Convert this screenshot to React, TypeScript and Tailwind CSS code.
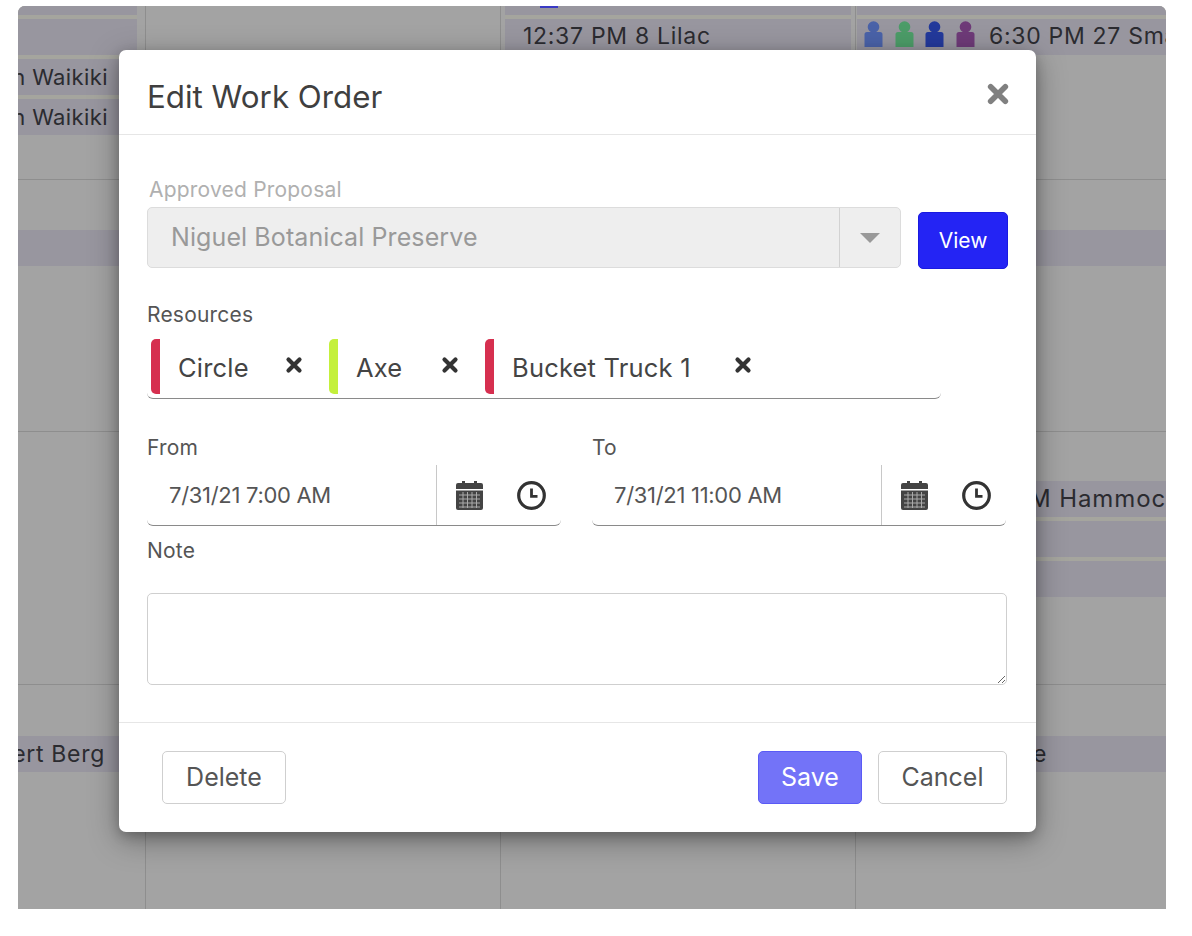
import type { ReactNode } from "react";

const font = "font-['Inter','Noto_Sans',sans-serif]";

function Person({ color }: { color: string }) {
  return (
    <svg width="19" height="26" viewBox="0 0 19 26" className="mb-[6px] shrink-0">
      <circle cx="9.5" cy="6" r="5.8" fill={color} />
      <path d="M0.500 13.500a2.500 2.500 0 0 1 2.500-2.500h13a2.500 2.500 0 0 1 2.500 2.500V26H0.500z" fill={color} />
    </svg>
  );
}

function Bar({ className = "", children }: { className?: string; children?: ReactNode }) {
  return (
    <div className={`flex h-[36px] shrink-0 items-center overflow-hidden whitespace-nowrap bg-[#98969f] text-[23px] tracking-[0.7px] text-[#2b2b30] ${className}`}>
      {children}
    </div>
  );
}

function Cross({ className = "" }: { className?: string }) {
  return (
    <svg viewBox="0 0 18 18" className={className} fill="none" stroke="currentColor" strokeWidth="4.2" strokeLinecap="round">
      <path d="M3.5 3.5l11 11M14.5 3.5l-11 11" />
    </svg>
  );
}

function CalendarIcon() {
  return (
    <svg width="27" height="30" viewBox="0 0 27 30" className="shrink-0 text-[#444]">
      <path d="M2 3h4V1h3v2h9V1h3v2h4a2 2 0 0 1 2 2v4H0V5a2 2 0 0 1 2-2z" fill="currentColor" />
      <path d="M0 10.5h27V28a2 2 0 0 1-2 2H2a2 2 0 0 1-2-2z" fill="currentColor" />
      <path d="M3 15h21M3 19h21M3 23h21M3 27h21M7 12v16M11.500 12v16M16 12v16M20.500 12v16" stroke="#fff" strokeWidth="1" opacity="0.55" />
    </svg>
  );
}

function ClockIcon() {
  return (
    <svg width="29" height="29" viewBox="0 0 29 29" className="ml-[34px] shrink-0" fill="none" stroke="#333" strokeWidth="3.200">
      <circle cx="14.500" cy="14.500" r="12.800" />
      <path d="M14.500 7.500v7.800h6" strokeWidth="2.800" />
    </svg>
  );
}

function Chip({ color, label, textWidth }: { color: string; label: string; textWidth: string }) {
  return (
    <div className="mr-[26px] flex h-[55px] items-center">
      <div className={`h-full w-[9px] rounded-l-[5px] ${color}`} />
      <span className={`ml-[18px] mt-[4px] text-[25.500px] tracking-[0.2px] text-[#444] ${textWidth}`}>{label}</span>
      <Cross className="mb-[4px] ml-[37px] h-[18px] w-[18px] text-[#333]" />
    </div>
  );
}

const labelText = "h-[24px] text-[21px] leading-[26px] tracking-[0.2px] text-[#555]";

function DateField({ label, value }: { label: string; value: string }) {
  return (
    <div className="w-[414px]">
      <div className={labelText}>{label}</div>
      <div className="mt-[6px] flex h-[61px] items-center rounded-b-[6px] border-b border-[#8a8a8a]">
        <div className="flex h-full w-[290px] items-center border-r border-[#c8c8c8] pl-[22px] text-[22px] tracking-[-0.3px] text-[#555]">
          {value}
        </div>
        <div className="ml-[19px] flex items-center">
          <CalendarIcon />
          <ClockIcon />
        </div>
      </div>
    </div>
  );
}

const btn = "flex h-[53px] items-center justify-center rounded-[5px] border text-[25px]";

export default function App() {
  return (
    <div className={`relative h-[936px] w-[1192px] overflow-hidden bg-white pl-[18px] pt-[6px] ${font}`}>
      {/* calendar behind the dialog */}
      <div className="flex h-[903px] w-[1148px] overflow-hidden rounded-t-[7px] bg-[#a3a3a3]">
        <div className="flex w-[128px] shrink-0 flex-col border-r border-[#8e8e8e]">
          <div className="h-[174px] shrink-0 border-b border-[#8e8e8e] pr-[8px]">
            <div className="flex flex-col gap-[4px] bg-[#a5a59e]">
              <Bar className="!h-[9px]" />
              <Bar />
              <Bar className="justify-end pr-[29px]">
                <span className="text-[22px] tracking-[0.4px]">an Waikiki</span>
              </Bar>
              <Bar className="justify-end pr-[29px]">
                <span className="text-[22px] tracking-[0.4px]">an Waikiki</span>
              </Bar>
            </div>
          </div>
          <div className="h-[252px] shrink-0 border-b border-[#8e8e8e] pt-[50px]">
            <Bar />
          </div>
          <div className="h-[253px] shrink-0 border-b border-[#8e8e8e]" />
          <div className="flex-1 pt-[51px]">
            <Bar className="justify-end pr-[40px]">Robert Berg</Bar>
          </div>
        </div>

        <div className="flex w-[355px] shrink-0 flex-col border-r border-[#8e8e8e]" />

        <div className="flex w-[355px] shrink-0 flex-col border-r border-[#8e8e8e] px-[4px]">
          <div className="flex flex-col gap-[4px] bg-[#a5a59e]">
            <Bar className="!h-[9px] !items-start pl-[35px]">
              <div className="h-[2px] w-[18px] bg-[#3a3ac4]" />
            </Bar>
            <Bar className="pl-[18px]">
              <span className="mb-[2px]">12:37 PM 8 Lilac</span>
            </Bar>
          </div>
        </div>

        <div className="flex flex-1 flex-col">
          <div className="h-[174px] shrink-0 border-b border-[#8e8e8e] pl-[1px]">
            <div className="flex flex-col gap-[4px] bg-[#a5a59e]">
              <Bar className="!h-[9px]" />
              <Bar className="gap-[11.500px] pl-[7px]">
                <Person color="#4a62a8" />
                <Person color="#4c9c68" />
                <Person color="#23399b" />
                <Person color="#6e3a78" />
                <span className="mb-[2px] ml-[3px]">6:30 PM 27 Small</span>
              </Bar>
            </div>
          </div>
          <div className="h-[252px] shrink-0 border-b border-[#8e8e8e] pt-[50px]">
            <Bar />
          </div>
          <div className="h-[253px] shrink-0 border-b border-[#8e8e8e] pt-[49px]">
            <div className="flex flex-col gap-[4px] bg-[#a5a59e]">
              <Bar className="pl-[173px]">
                <span className="text-[24px] tracking-[0.9px]">M Hammock</span>
              </Bar>
              <Bar />
              <Bar />
            </div>
          </div>
          <div className="flex-1 pt-[51px]">
            <Bar className="pl-[177px]">e</Bar>
          </div>
        </div>
      </div>

      {/* dialog */}
      <div className="absolute left-[119px] top-[50px] flex h-[782px] w-[917px] flex-col rounded-[7px] bg-white shadow-[0_4px_12px_rgba(0,0,0,0.2),0_8px_30px_rgba(0,0,0,0.35)]">
        <div className="flex h-[85px] shrink-0 items-center justify-between border-b border-[#e6e6e6] pl-[28px] pr-[26px]">
          <h1 className="mt-[10px] text-[31.300px] font-normal text-[#3f3f3f]">Edit Work Order</h1>
          <Cross className="mt-[3px] h-[24px] w-[24px] text-[#808080]" />
        </div>

        <div className="flex-1 px-[28px] pt-[43px]">
          <div className="h-[24px] pl-[2px] text-[21px] leading-[24px] tracking-[0.2px] text-[#b0b0b0]">Approved Proposal</div>
          <div className="mt-[5px] flex">
            <div className="flex h-[61px] w-[754px] items-center rounded-[5px] border border-[#dcdcdc] bg-[#eeeeee]">
              <div className="mt-[1px] flex-1 pl-[23px] text-[25px] tracking-[0.1px] text-[#999]">Niguel Botanical Preserve</div>
              <div className="flex h-full w-[61px] items-center justify-center border-l border-[#d2d2d2]">
                <div className="h-0 w-0 border-x-[10px] border-t-[10px] border-x-transparent border-t-[#999]" />
              </div>
            </div>
            <button className="ml-[17px] mt-[5px] h-[57px] w-[90px] rounded-[5px] border border-[#1a1ae0] bg-[#2424f4] text-[21px] text-white">
              View
            </button>
          </div>

          <div className="mt-[34px] h-[24px] text-[21px] leading-[24px] tracking-[0.2px] text-[#555]">Resources</div>
          <div className="flex h-[72px] w-[794px] items-start rounded-b-[6px] border-b border-[#8a8a8a] pl-[4px] pt-[12px]">
            <Chip color="bg-[#d62f4f]" label="Circle" textWidth="w-[70px]" />
            <Chip color="bg-[#c4f03c]" label="Axe" textWidth="w-[48px]" />
            <Chip color="bg-[#d62f4f]" label="Bucket Truck 1" textWidth="w-[185px]" />
          </div>

          <div className="mt-[36px] flex gap-[31px]">
            <DateField label="From" value="7/31/21 7:00 AM" />
            <DateField label="To" value="7/31/21 11:00 AM" />
          </div>

          <div className={`mt-[12px] ${labelText}`}>Note</div>
          <textarea className="mt-[31px] block h-[92px] w-[860px] rounded-[5px] border border-[#cfcfcf] bg-white" />
        </div>

        <div className="flex h-[110px] shrink-0 items-start justify-between border-t border-[#e6e6e6] pl-[43px] pr-[29px] pt-[28px]">
          <button className={`${btn} w-[124px] border-[#cfcfcf] bg-white text-[#555]`}>Delete</button>
          <div className="flex gap-[16px]">
            <button className={`${btn} w-[104px] border-[#5a5af5] bg-[#7373f8] text-white`}>Save</button>
            <button className={`${btn} w-[129px] border-[#cfcfcf] bg-white text-[#555]`}>Cancel</button>
          </div>
        </div>
      </div>
    </div>
  );
}
